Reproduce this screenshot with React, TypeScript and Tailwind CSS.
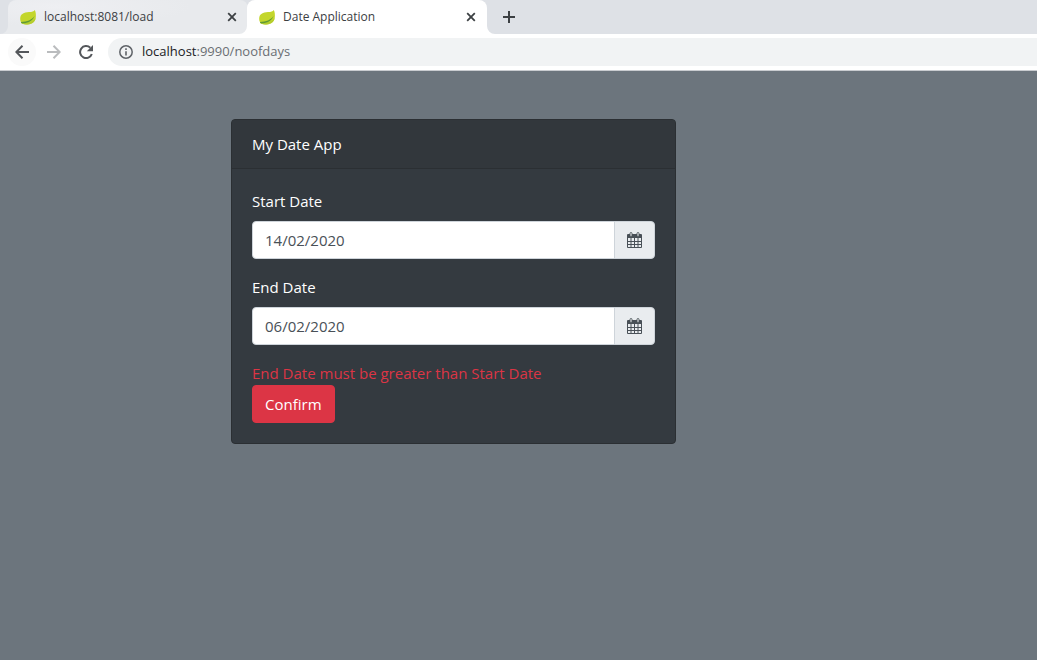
import { useState } from "react";

function LeafIcon() {
  return (
    <svg viewBox="0 0 16 16" className="h-4 w-4 shrink-0" aria-hidden="true">
      <path
        d="M14.800 1C13.800 2.400 12 2.900 9 3.100 4 3.500.3 5 .2 9.600c0 1.800.3 2.900 1 3.900 1 1.800 3.400 2.100 6.300 1.900 5.600-.3 8.500-3.400 8.400-8.900 0-2.300-.3-4.100-1.100-5.500z"
        fill="#c3d62c"
      />
      <path d="M1.200 13.500c1 1.800 3.400 2.100 6.300 1.900 4.600-.3 7.400-2.500 8.200-6.400-2.500 3.700-7 4.500-10.700 4.500-1.500 0-2.800-.3-3.800 0z" fill="#b3cc2e" />
      <path d="M1 12.900c6.300-.1 10.700-1.900 13.600-5.900-1.900 5.200-7.300 7.600-12.400 7.300-.7-.1-1.200-.8-1.200-1.400z" fill="#5f9a35" />
    </svg>
  );
}

function CloseIcon() {
  return (
    <svg viewBox="0 0 10 10" className="h-[10px] w-[10px]" aria-hidden="true">
      <path d="M1.200 1.200l7.600 7.600M8.800 1.200l-7.600 7.600" stroke="#3c4043" strokeWidth="1.800" />
    </svg>
  );
}

function TabFoot({ side, fill }: { side: "left" | "right"; fill: string }) {
  return (
    <svg
      viewBox="0 0 8 8"
      className={side === "left" ? "absolute bottom-0 -left-2 h-2 w-2" : "absolute -right-2 bottom-0 h-2 w-2"}
      aria-hidden="true"
    >
      <path d={side === "left" ? "M8 0v8H0a8 8 0 0 0 8-8z" : "M0 0v8h8a8 8 0 0 1-8-8z"} fill={fill} />
    </svg>
  );
}

function Tab({ title, active }: { title: string; active?: boolean }) {
  return (
    <div
      className={
        "relative flex h-full w-60 items-center rounded-t-lg pr-[11px] pl-3 " +
        (active ? "z-10 bg-white" : "-mr-px bg-[#e8eaed] bg-radial-[at_20%_20%] from-[#eeeff2] to-[#e8eaed] to-50%")
      }
    >
      <TabFoot side="left" fill={active ? "#ffffff" : "#e8eaed"} />
      <LeafIcon />
      <span className="ml-2 flex-1 truncate text-xs text-[#3c4043]">{title}</span>
      <button type="button" aria-label={"Close " + title}>
        <CloseIcon />
      </button>
      {active && <TabFoot side="right" fill="#ffffff" />}
    </div>
  );
}

function BrowserChrome() {
  return (
    <header className="border-b border-[#c9ccd0] bg-white">
      <div className="flex h-[34px] bg-[#dee1e6] pl-2">
        <Tab title="localhost:8081/load" />
        <Tab title="Date Application" active />
        <button type="button" aria-label="New tab" className="ml-4 flex items-center">
          <svg viewBox="0 0 12 12" className="h-3 w-3" aria-hidden="true">
            <path d="M6 0v12M0 6h12" stroke="#3c4043" strokeWidth="2" />
          </svg>
        </button>
      </div>
      <div className="flex h-9 items-center pl-2">
        <button type="button" aria-label="Back" className="flex h-7 w-7 items-center justify-center rounded-full bg-[#fafafa]">
          <svg viewBox="0 0 14 14" className="h-[14px] w-[14px]" fill="none" stroke="#54575b" strokeWidth="2" aria-hidden="true">
            <path d="M14 7H1.500M7.500.8L1.300 7l6.200 6.200" />
          </svg>
        </button>
        <button type="button" aria-label="Forward" className="ml-1 flex h-7 w-7 items-center justify-center">
          <svg viewBox="0 0 14 14" className="h-[14px] w-[14px]" fill="none" stroke="#babcbe" strokeWidth="2" aria-hidden="true">
            <path d="M0 7h12.500M6.500.8L12.700 7l-6.200 6.200" />
          </svg>
        </button>
        <button type="button" aria-label="Reload" className="ml-1 flex h-7 w-7 items-center justify-center">
          <svg viewBox="0 0 14 14" className="h-[14px] w-[14px]" aria-hidden="true">
            <path d="M12.800 9A6 6 0 1 1 11.300 2.800" fill="none" stroke="#54575b" strokeWidth="2" />
            <path d="M14 0v6.200H7.800z" fill="#54575b" />
          </svg>
        </button>
        <div className="ml-2 flex h-7 flex-1 items-center rounded-l-full bg-[#f1f3f4] pl-[11px]">
          <svg viewBox="0 0 14 14" className="h-[14px] w-[14px]" aria-hidden="true">
            <circle cx="7" cy="7" r="6.200" fill="none" stroke="#5f6368" strokeWidth="1.500" />
            <path d="M7 6.200v4.400M7 3.300v1.600" stroke="#5f6368" strokeWidth="1.600" />
          </svg>
          <span className="ml-[9px] text-[13px] text-[#6a6e73]">
            <span className="text-[#202124]">localhost</span>:9990/noofdays
          </span>
        </div>
      </div>
    </header>
  );
}

function CalendarIcon() {
  return (
    <svg viewBox="0 0 15 16" className="h-4 w-[15px]" aria-hidden="true">
      <path d="M1 2h13a1 1 0 0 1 1 1v3H0V3a1 1 0 0 1 1-1z" fill="#495057" />
      <path d="M.5 6v9.500h14V6M4 6v9M7.500 6v9M11 6v9M1 9.500h13M1 12.500h13" fill="none" stroke="#495057" strokeWidth="1" />
      <rect x="3" y=".5" width="2" height="4" rx="1" fill="#e9ecef" stroke="#495057" strokeWidth=".9" />
      <rect x="10" y=".5" width="2" height="4" rx="1" fill="#e9ecef" stroke="#495057" strokeWidth=".9" />
    </svg>
  );
}

function DateField({ id, label, initial }: { id: string; label: string; initial: string }) {
  const [value, setValue] = useState(initial);
  return (
    <div className="mb-4">
      <label htmlFor={id} className="mb-2 block">
        {label}
      </label>
      <div className="flex h-[38px]">
        <input
          id={id}
          type="text"
          value={value}
          onChange={(e) => setValue(e.target.value)}
          className="min-w-0 flex-1 rounded-l border border-[#ced4da] bg-white px-3 text-[#495057]"
        />
        <button
          type="button"
          aria-label={"Choose " + label}
          className="-ml-px flex items-center rounded-r border border-[#ced4da] bg-[#e9ecef] px-3"
        >
          <CalendarIcon />
        </button>
      </div>
    </div>
  );
}

export default function App() {
  return (
    <div className="flex min-h-screen flex-col bg-[#6c757d] font-['Open_Sans','Noto_Sans',sans-serif]">
      <BrowserChrome />
      <main className="flex-1 pt-12 pl-[231px]">
        <section className="max-w-[445px] overflow-hidden rounded border border-[#2b2f33] bg-[#343a40] text-[15px] leading-6 text-white">
          <h1 className="border-b border-[#2b2f33] bg-[#32373c] px-5 py-3">My Date App</h1>
          <form className="p-5" onSubmit={(e) => e.preventDefault()}>
            <DateField id="start-date" label="Start Date" initial="14/02/2020" />
            <DateField id="end-date" label="End Date" initial="06/02/2020" />
            <p className="text-[#dc3545]">End Date must be greater than Start Date</p>
            <button type="submit" className="block h-[38px] rounded border border-[#dc3545] bg-[#dc3545] px-3">
              Confirm
            </button>
          </form>
        </section>
      </main>
    </div>
  );
}
